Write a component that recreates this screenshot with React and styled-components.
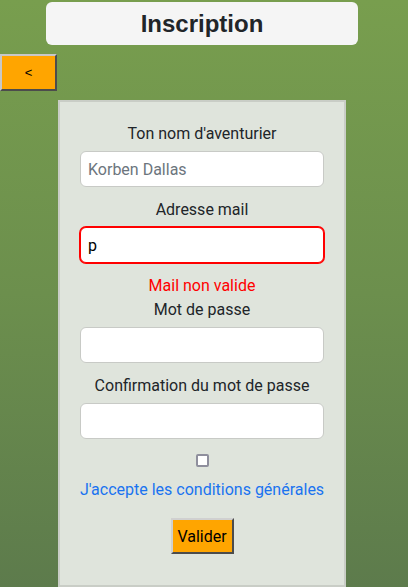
import React from "react";
import styled, { createGlobalStyle } from "styled-components";

const GlobalStyle = createGlobalStyle`
  html, body {
    margin: 0;
    padding: 0;
  }
  body {
    min-height: 587px;
    background: linear-gradient(180deg, #789e4e 0%, #6c8f4d 50%, #5d7b4c 100%);
    font-family: Roboto, "Liberation Sans", sans-serif;
    color: #212529;
  }
`;

const Page = styled.div`
  min-height: 587px;
  padding-top: 2px;
  box-sizing: border-box;
  display: flex;
  flex-direction: column;
  align-items: flex-start;
`;

const Header = styled.header`
  margin-left: 46px;
  width: 312px;
  height: 43px;
  border-radius: 6px;
  background: #f5f5f5;
  display: flex;
  align-items: center;
  justify-content: center;
`;

const Title = styled.h1`
  margin: 0;
  font-family: "Liberation Sans", Arial, sans-serif;
  font-weight: 700;
  font-size: 24px;
  color: #212529;
`;

const BackButton = styled.button`
  margin-top: 9px;
  width: 57px;
  height: 37px;
  background: #ffa500;
  border: 2px outset #a0a0a0;
  border-top-color: #c8c8c8;
  border-left-color: #c8c8c8;
  font-family: "Liberation Sans", Arial, sans-serif;
  font-size: 13px;
  color: #000;
  padding: 0;
`;

const Card = styled.form`
  margin: 9px 0 0 58px;
  width: 288px;
  flex: 1;
  box-sizing: border-box;
  background: #dfe4dc;
  border: 2px solid #c9cdc6;
  padding: 20px 20px 30px;
  display: flex;
  flex-direction: column;
  align-items: stretch;
`;

const Label = styled.label`
  display: block;
  text-align: center;
  font-size: 16px;
  line-height: 24px;
  color: #212529;
  margin-bottom: 5px;
`;

const Input = styled.input`
  display: block;
  box-sizing: border-box;
  width: 100%;
  height: 36px;
  margin: 0 0 11px;
  padding: 0 7px;
  border: 1px solid ${(p) => (p.$error ? "#ff0000" : "#c8cac6")};
  box-shadow: ${(p) => (p.$error ? "0 0 0 1px #ff0000" : "none")};
  border-radius: 6px;
  background: #fff;
  font-family: Roboto, "Liberation Sans", sans-serif;
  font-size: 16px;
  color: #000;
  outline: none;

  &::placeholder {
    color: #6c757d;
  }
`;

const ErrorText = styled.div`
  text-align: center;
  font-size: 16px;
  line-height: 24px;
  color: #ff0000;
`;

const Checkbox = styled.input`
  appearance: none;
  -webkit-appearance: none;
  display: block;
  box-sizing: border-box;
  width: 13px;
  height: 13px;
  margin: 4px auto 0;
  border: 2px solid #8f8f9d;
  border-radius: 2px;
  background: #fff;

  &:checked {
    background: #0d6efd;
    border-color: #0d6efd;
  }
`;

const TermsLink = styled.a`
  display: block;
  text-align: center;
  white-space: nowrap;
  margin: 10.5px -4px 0;
  font-size: 16px;
  line-height: 24px;
  color: #1a73f0;
  text-decoration: none;
  cursor: pointer;
`;

const SubmitButton = styled.button`
  align-self: center;
  margin-top: 16.5px;
  width: 63px;
  height: 36px;
  padding: 0;
  background: #ffa500;
  border: 2px outset #a0a0a0;
  border-top-color: #d0d0d0;
  border-left-color: #d0d0d0;
  font-family: Roboto, "Liberation Sans", sans-serif;
  font-size: 16px;
  color: #000;
`;

export default function App() {
  return (
    <>
      <GlobalStyle />
      <Page>
        <Header>
          <Title>Inscription</Title>
        </Header>
        <BackButton type="button">&lt;</BackButton>
        <Card onSubmit={(e) => e.preventDefault()}>
          <Label htmlFor="name">Ton nom d'aventurier</Label>
          <Input id="name" type="text" placeholder="Korben Dallas" />
          <Label htmlFor="mail">Adresse mail</Label>
          <Input id="mail" type="text" defaultValue="p" $error />
          <ErrorText>Mail non valide</ErrorText>
          <Label htmlFor="pw">Mot de passe</Label>
          <Input id="pw" type="password" />
          <Label htmlFor="pw2">Confirmation du mot de passe</Label>
          <Input id="pw2" type="password" />
          <Checkbox type="checkbox" aria-label="conditions" />
          <TermsLink>J'accepte les conditions générales</TermsLink>
          <SubmitButton type="submit">Valider</SubmitButton>
        </Card>
      </Page>
    </>
  );
}
